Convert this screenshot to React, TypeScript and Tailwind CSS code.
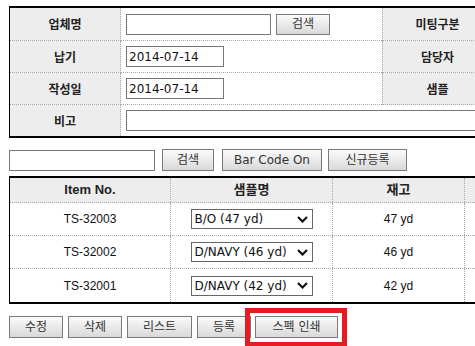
import { ReactNode } from 'react';

const ko = "font-['Noto_Sans_CJK_KR',sans-serif]";
const tah = "font-['DejaVu_Sans','Noto_Sans_CJK_KR',sans-serif]";
const cell = "font-['Liberation_Sans','Noto_Sans_CJK_KR',sans-serif]";

function Btn({ children, className = '' }: { children: ReactNode; className?: string }) {
  return (
    <button
      className={`flex items-center justify-center border border-[#7a7a7a] bg-gradient-to-b from-[#fbfbfb] to-[#d9d9d9] text-[12px] leading-none text-[#333] ${tah} ${className}`}
    >
      {children}
    </button>
  );
}

function Label({ children, last = false, left = false }: { children: ReactNode; last?: boolean; left?: boolean }) {
  return (
    <div
      className={`flex items-center justify-center bg-[#ededed] text-[12px] font-bold text-[#222] ${ko} ${
        last ? '' : 'border-b border-dotted border-b-[#a8a8a8]'
      } ${left ? 'border-l border-dotted border-l-[#a8a8a8]' : 'border-r border-dotted border-r-[#a8a8a8]'}`}
    >
      {children}
    </div>
  );
}

function Field({ children, last = false }: { children?: ReactNode; last?: boolean }) {
  return (
    <div className={`flex items-center gap-[5px] pl-[5px] ${last ? '' : 'border-b border-dotted border-b-[#a8a8a8]'}`}>
      {children}
    </div>
  );
}

function TextBox({ value = '', className = '' }: { value?: string; className?: string }) {
  return (
    <input
      readOnly
      value={value}
      className={`h-[21px] border border-[#777] bg-white px-[2px] text-[12px] text-[#111] outline-none ${tah} ${className}`}
    />
  );
}

function Select({ label }: { label: string }) {
  return (
    <div className={`flex h-[20px] w-[122px] items-center justify-between border border-[#666] bg-white pl-[3px] pr-[4px] text-[12px] text-[#111] ${tah}`}>
      <span>{label}</span>
      <svg width="11" height="7" viewBox="0 0 11 7">
        <path d="M1 1 L5.5 5.5 L10 1" fill="none" stroke="#111" strokeWidth="2.2" />
      </svg>
    </div>
  );
}

const rows = [
  { no: 'TS-32003', sample: 'B/O (47 yd)', stock: '47 yd' },
  { no: 'TS-32002', sample: 'D/NAVY (46 yd)', stock: '46 yd' },
  { no: 'TS-32001', sample: 'D/NAVY (42 yd)', stock: '42 yd' },
];

export default function App() {
  return (
    <div className="h-[346px] w-[475px] overflow-hidden bg-white pl-[9px] pt-[6px]">
      {/* 상단 정보 테이블 */}
      <div className="grid w-[700px] grid-cols-[111px_261px_110px_1fr] grid-rows-[33px_32px_32px_31px] border-t-2 border-b-2 border-l border-black">
        <Label>업체명</Label>
        <Field>
          <TextBox className="w-[145px]" />
          <Btn className="h-[21px] w-[54px]">검색</Btn>
        </Field>
        <Label left>미팅구분</Label>
        <Field />

        <Label>납기</Label>
        <Field>
          <TextBox value="2014-07-14" className="w-[98px]" />
        </Field>
        <Label left>담당자</Label>
        <Field />

        <Label>작성일</Label>
        <Field>
          <TextBox value="2014-07-14" className="w-[98px]" />
        </Field>
        <Label left>샘플</Label>
        <Field />

        <Label last>비고</Label>
        <div className="col-span-3 flex items-center pl-[5px]">
          <TextBox className="h-[20px] w-[500px]" />
        </div>
      </div>

      {/* 검색 */}
      <div className="mt-[11px] flex items-center">
        <TextBox className="h-[20px] w-[146px]" />
        <Btn className="ml-[7px] h-[22px] w-[52px]">검색</Btn>
        <Btn className="ml-[8px] h-[22px] w-[100px]">Bar Code On</Btn>
        <Btn className="ml-[6px] h-[22px] w-[79px]">신규등록</Btn>
      </div>

      {/* 아이템 목록 */}
      <div className="mt-[5px] w-[700px] border-t-2 border-b-2 border-l border-black">
        <div className="grid h-[25px] grid-cols-[161px_162px_132px_1fr] border-b border-dotted border-b-[#a8a8a8] bg-[#ededed]">
          {['Item No.', '샘플명', '재고', ''].map((h, i) => (
            <div
              key={i}
              className={`flex items-center justify-center text-[13px] font-bold text-[#222] font-['Liberation_Sans','Noto_Sans_CJK_KR',sans-serif] ${
                i < 3 ? 'border-r border-dotted border-r-[#a8a8a8]' : ''
              }`}
            >
              {h}
            </div>
          ))}
        </div>
        {rows.map((r, idx) => (
          <div
            key={r.no}
            className={`grid h-[33px] grid-cols-[161px_162px_132px_1fr] ${
              idx < rows.length - 1 ? 'border-b border-dotted border-b-[#a8a8a8]' : 'h-[32px]'
            }`}
          >
            <div className={`flex items-center justify-center border-r border-dotted border-r-[#a8a8a8] text-[12px] text-[#111] ${cell}`}>
              {r.no}
            </div>
            <div className="flex items-center justify-center border-r border-dotted border-r-[#a8a8a8]">
              <Select label={r.sample} />
            </div>
            <div className={`flex items-center justify-center border-r border-dotted border-r-[#a8a8a8] text-[12px] text-[#111] ${cell}`}>
              {r.stock}
            </div>
            <div />
          </div>
        ))}
      </div>

      {/* 하단 버튼 */}
      <div className="mt-[12px] flex items-center">
        <Btn className="h-[22px] w-[54px]">수정</Btn>
        <Btn className="ml-[5px] h-[22px] w-[54px]">삭제</Btn>
        <Btn className="ml-[5px] h-[22px] w-[65px]">리스트</Btn>
        <Btn className="ml-[5px] h-[22px] w-[54px]">등록</Btn>
        <div className="relative ml-[4px]">
          <Btn className="h-[22px] w-[83px]">스펙 인쇄</Btn>
          <span className="pointer-events-none absolute -top-[8px] -bottom-[9px] -left-[10px] -right-[9px] border-[5px] border-[#e51c24]" />
        </div>
      </div>
    </div>
  );
}
